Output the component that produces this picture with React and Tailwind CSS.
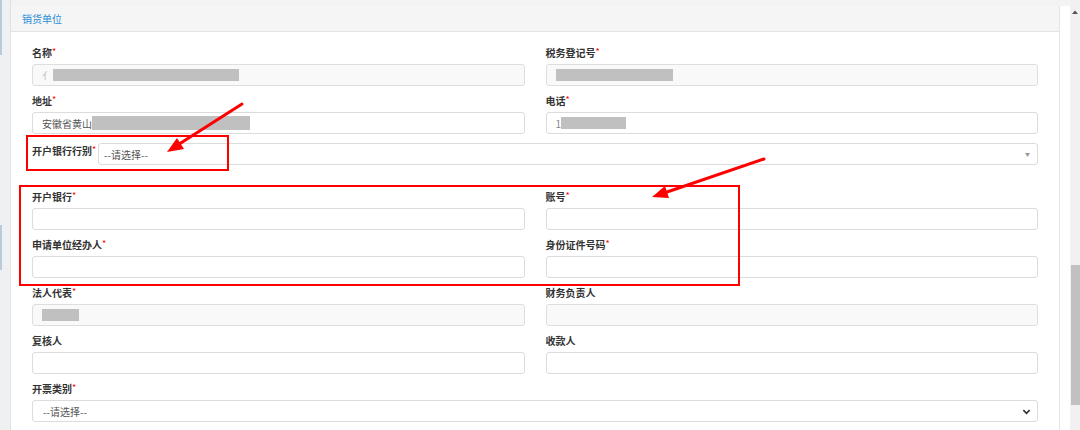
import React from 'react';

const font = { fontFamily: '"Noto Sans CJK SC", "Noto Sans", sans-serif' };

const Label = ({ text, required }) => (
  <div className="h-[16px] mb-[4px] flex items-center text-[10px] font-bold text-[#333]">
    {text}
    {required && <span className="text-[#f00] text-[9px] font-normal self-start mt-[1px]">*</span>}
  </div>
);

const Input = ({ readOnly, focus, children }) => (
  <div
    className={`h-[22px] rounded-[3px] border flex items-center pl-[9px] text-[10px] text-[#555] ${
      readOnly ? 'bg-[#f9f9f9] border-[#dedede]' : 'bg-white border-[#dcdcdc]'
    } ${focus ? 'border-[#c4d3e2]' : ''}`}
  >
    {children}
  </div>
);

const Blur = ({ w }) => <span className={`inline-block h-[12px] bg-[#c0c0c0] ${w}`} />;

const Field = ({ label, required, readOnly, focus, children }) => (
  <div className="mb-[6px]">
    <Label text={label} required={required} />
    <Input readOnly={readOnly} focus={focus}>{children}</Input>
  </div>
);

const Row = ({ children }) => <div className="grid grid-cols-2 gap-x-[21px]">{children}</div>;

export default function App() {
  return (
    <div className="relative w-[1080px] h-[430px] overflow-hidden bg-white flex" style={font}>
      {/* left cut-off sidebar */}
      <div className="w-[11px] bg-[#eff0f1] flex flex-col border-r border-[#e2e2e2]">
        <div className="w-[2px] h-[55px] bg-[#b9cbdb]" />
        <div className="h-[170px]" />
        <div className="w-[2px] h-[45px] bg-[#b9cbdb]" />
      </div>

      {/* main */}
      <div className="flex-1 flex flex-col">
        <div className="h-[6px] bg-[#f3f3f3]" />
        <div className="flex-1 flex">
          <div className="flex-1 border-r border-[#e3e3e3]">
            <div className="h-[26px] bg-[#f5f5f5] border-b border-[#e3e3e3] flex items-center pl-[11px] text-[10px] text-[#2b8fd8]">
              销货单位
            </div>
            <div className="pl-[21px] pr-[21px] pt-[12px]">
              <Row>
                <Field label="名称" required readOnly>
                  <span className="text-[#bbb] mr-[1px]">亻</span>
                  <Blur w="w-[186px]" />
                </Field>
                <Field label="税务登记号" required readOnly>
                  <Blur w="w-[117px]" />
                </Field>
              </Row>
              <Row>
                <Field label="地址" required>
                  <span>安徽省黄山</span>
                  <span className="inline-block h-[14px] w-[158px] bg-[#c0c0c0]" />
                </Field>
                <Field label="电话" required>
                  <span className="text-[#888]">1</span>
                  <Blur w="w-[65px]" />
                </Field>
              </Row>

              <div className="flex items-start mt-[3px]">
                <div className="w-[66px] h-[14px] flex items-center text-[10px] font-bold text-[#333]">
                  开户银行行别
                  <span className="text-[#f00] text-[9px] font-normal self-start">*</span>
                </div>
                <div className="flex-1 h-[22px] rounded-[3px] border border-[#dcdcdc] bg-white flex items-center justify-between pl-[5px] pr-[7px] text-[10px] text-[#555]">
                  <span>--请选择--</span>
                  <span className="text-[5px] text-[#999]">▼</span>
                </div>
              </div>

              <div className="mt-[23px]">
                <Row>
                  <Field label="开户银行" required />
                  <Field label="账号" required focus />
                </Row>
                <Row>
                  <Field label="申请单位经办人" required />
                  <Field label="身份证件号码" required />
                </Row>
                <Row>
                  <Field label="法人代表" required readOnly>
                    <Blur w="w-[37px]" />
                  </Field>
                  <Field label="财务负责人" readOnly />
                </Row>
                <Row>
                  <Field label="复核人" />
                  <Field label="收款人" />
                </Row>
                <div>
                  <Label text="开票类别" required />
                  <div className="h-[22px] rounded-[3px] border border-[#dcdcdc] bg-white flex items-center justify-between pl-[10px] pr-[6px] text-[10px] text-[#555]">
                    <span>--请选择--</span>
                    <svg width="9" height="9" viewBox="0 0 10 10">
                      <path d="M1.5 3.5 L5 7 L8.5 3.5" fill="none" stroke="#333" strokeWidth="1.8" />
                    </svg>
                  </div>
                </div>
              </div>
            </div>
          </div>
          <div className="w-[10px] bg-white" />
        </div>
      </div>

      {/* scrollbar */}
      <div className="w-[10px] bg-[#f1f1f1] flex flex-col items-center">
        <div className="h-[6px]" />
        <svg width="6" height="6" viewBox="0 0 6 6" className="mt-[3px]">
          <path d="M0 5 L3 1.5 L6 5 Z" fill="#555" />
        </svg>
        <div className="h-[250px]" />
        <div className="w-[9px] ml-[1px] h-[140px] bg-[#c1c1c1]" />
      </div>

      {/* annotations */}
      <div className="absolute left-[26px] top-[135px] w-[203px] h-[36px] border-2 border-[#ff0000] pointer-events-none" />
      <div className="absolute left-[19px] top-[185px] w-[721px] h-[101px] border-2 border-[#ff0000] pointer-events-none" />
      <svg className="absolute left-0 top-0 pointer-events-none" width="1080" height="430">
        <line x1="242" y1="104" x2="180" y2="143.6" stroke="#ff0000" strokeWidth="3" strokeLinecap="round" />
        <polygon points="167,152 184,149 177,138" fill="#ff0000" />
        <line x1="764" y1="159" x2="667" y2="192" stroke="#ff0000" strokeWidth="3" strokeLinecap="round" />
        <polygon points="652,197 669,198 665,186" fill="#ff0000" />
      </svg>
    </div>
  );
}
